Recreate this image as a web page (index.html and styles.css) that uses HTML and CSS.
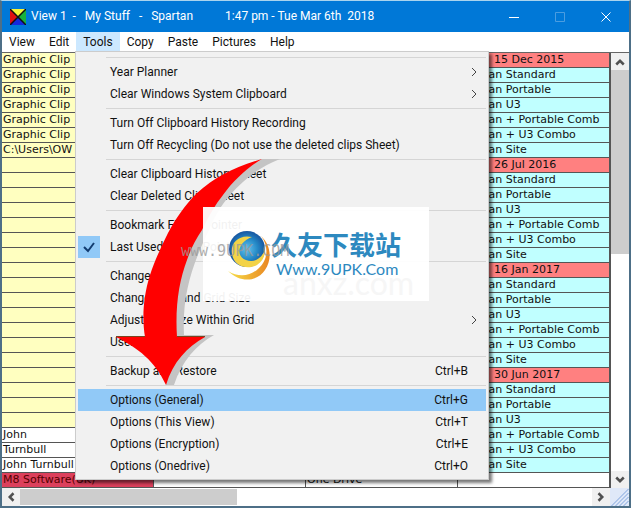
FILE: index.html
```html
<!DOCTYPE html>
<html lang="en">
<head>
<meta charset="utf-8">
<title>View 1 - My Stuff - Spartan</title>
<link rel="stylesheet" href="styles.css">
</head>
<body>
<main class="window">
  <header class="titlebar">
    <svg class="app-icon" viewBox="0 0 16 16" aria-hidden="true">
      <path fill="#f4f43a" d="M0 0h16L8 8z"/><path fill="#19b23c" d="M16 0v16L8 8z"/><path fill="#1428dc" d="M0 16h16L8 8z"/><path fill="#e01010" d="M0 0v16l8-8z"/>
      <path stroke="#111" stroke-width="1.500" d="M0 0l16 16M16 0L0 16"/>
    </svg>
    <h1 class="title"><span>View 1&nbsp; - &nbsp; My Stuff &nbsp; - &nbsp; Spartan</span><span>1:47 pm - Tue Mar 6th&nbsp; 2018</span></h1>
    <div class="controls">
      <button aria-label="Minimize"><svg viewBox="0 0 12 12"><path d="M1 6.500h10"/></svg></button>
      <button class="dim" aria-label="Maximize"><svg viewBox="0 0 12 12"><path d="M1.500 1.500h9v9h-9z"/></svg></button>
      <button aria-label="Close"><svg viewBox="0 0 12 12"><path d="M1.500 1.500l9 9m0-9l-9 9"/></svg></button>
    </div>
  </header>
  <nav class="menubar">
    <button>View</button><button>Edit</button><button class="open">Tools</button><button>Copy</button><button>Paste</button><button>Pictures</button><button>Help</button>
  </nav>
  <section class="workspace">
    <table class="sheet"><tbody id="rows"></tbody></table>
    <div class="vscroll">
      <button aria-label="Scroll up"><svg viewBox="0 0 8 8"><path d="M1 6l3-3 3 3"/></svg></button>
      <div class="track"><div class="thumb"></div></div>
      <button aria-label="Scroll down"><svg viewBox="0 0 8 8"><path d="M1 2l3 3 3-3"/></svg></button>
    </div>
    <div class="popup">
      <hr>
      <button>Year Planner<svg viewBox="0 0 8 8"><path d="M2 0l4 4-4 4"/></svg></button>
      <button>Clear Windows System Clipboard<svg viewBox="0 0 8 8"><path d="M2 0l4 4-4 4"/></svg></button>
      <hr>
      <button>Turn Off Clipboard History Recording</button>
      <button>Turn Off Recycling (Do not use the deleted clips Sheet)</button>
      <hr>
      <button>Clear Clipboard History Sheet</button>
      <button>Clear Deleted Clips Sheet</button>
      <hr>
      <button>Bookmark Finger Pointer</button>
      <button class="checked"><svg class="tick" viewBox="0 0 22 22"><path d="M6 11l4 4 6-8"/></svg>Last Used Finger Pointer</button>
      <hr>
      <button>Change Font</button>
      <button>Change Font and Grid Size</button>
      <button>Adjust Clip Size Within Grid<svg viewBox="0 0 8 8"><path d="M2 0l4 4-4 4"/></svg></button>
      <button>User Sounds</button>
      <hr>
      <button>Backup and Restore<kbd>Ctrl+B</kbd></button>
      <hr>
      <button class="selected">Options (General)<kbd>Ctrl+G</kbd></button>
      <button>Options (This View)<kbd>Ctrl+T</kbd></button>
      <button>Options (Encryption)<kbd>Ctrl+E</kbd></button>
      <button>Options (Onedrive)<kbd>Ctrl+O</kbd></button>
    </div>
  </section>
  <footer class="hscroll">
    <button aria-label="Scroll left"><svg viewBox="0 0 8 8"><path d="M6 1L3 4l3 3"/></svg></button>
    <div class="track"><div class="thumb"></div></div>
    <button aria-label="Scroll right"><svg viewBox="0 0 8 8"><path d="M2 1l3 3-3 3"/></svg></button>
    <svg class="grip" viewBox="0 0 18 18" aria-hidden="true"><path d="M1 18L18 1M5 18L18 5M9 18l9-9M13 18l5-5"/></svg>
  </footer>
  <svg class="arrow" viewBox="0 0 170 232" aria-hidden="true">
    <path fill="#c4c4c4" d="M168 4C148 12 132 24 118 40 108 52 102 62 97 75 80 110 70 140 72 180H102C84 190 70 206 62 230L54 230 60 100 110 30 150 4z"/>
    <path fill="#f00" d="M150 4C122 12 103 22 85 38 73 50 64 63 56 78 49 92 43 105 38 120 31 142 30 164 33 182H4C26 193 43 206 54 230 61 207 75 192 93 182H65C63 152 67 126 75 105 79 93 84 84 90 75 96 62 103 50 111 40 122 25 135 13 150 4z"/>
    <path stroke="#79451f" d="M4 181.500h29M65 181.500h28"/>
  </svg>
  <aside class="brand">
    <svg viewBox="0 0 44 50" aria-hidden="true">
      <defs><radialGradient id="globe"><stop offset="0" stop-color="#62c4ee"/><stop offset=".6" stop-color="#2387c5"/><stop offset="1" stop-color="#1856a0"/></radialGradient><linearGradient id="gold"><stop offset="0" stop-color="#f7df48"/><stop offset="1" stop-color="#e98622"/></linearGradient></defs>
      <circle cx="21" cy="19" r="18" fill="url(#globe)"/>
      <path fill="#f3d347" d="M26 7C13 4 4 13 6 24c2 13 16 16 25 11 6-4 8-9 8-15-4 9-11 13-19 10C9 26 12 12 26 7z"/>
      <path fill="url(#gold)" d="M35 6c8 10 7 24-2 32-8 8-20 10-31 3 13 13 30 10 37-1C47 28 44 14 35 6z"/>
    </svg>
    <div class="brand-text"><strong>久友下载站</strong><span>Www.9UPK.Com</span></div>
    <span class="ghost">anxz.com</span>
  </aside>
  <span class="watermark">www.9UPK.COM</span>
</main>
<script src="rows.js"></script>
</body>
</html>
```
FILE: styles.css
```css
* { box-sizing: border-box; }
body { margin: 0; font: 12px/15px Roboto, "Open Sans", sans-serif; color: #111; background: #fff; }
button { border: 0; padding: 0; margin: 0; background: none; font: inherit; color: inherit; }
svg { fill: none; stroke: none; flex: none; }
.window { position: relative; margin-right: 2px; border: 2px solid #4d6f87; border-top: 1px solid #a9d4ee; background: #fff; overflow: hidden; }
.titlebar { height: 31px; display: flex; align-items: center; padding-left: 8px; gap: 5px; background: #0078d7; color: #fff; }
.app-icon { width: 16px; height: 16px; }
.title { flex: 1; display: flex; gap: 32px; margin: 0; font-size: 12px; font-weight: 400; white-space: nowrap; }
.controls { display: flex; }
.controls button { width: 46px; height: 31px; display: grid; place-items: center; }
.controls svg { width: 12px; height: 12px; stroke: #fff; }
.controls .dim svg { stroke: #4b9de0; }
.menubar { height: 20px; display: flex; }
.menubar button { padding: 0 7px; }
.menubar .open { background: #cce8ff; }
.workspace { position: relative; display: flex; border-top: 1px solid #666; }
.sheet { flex: 1; width: 100%; min-width: 0; table-layout: fixed; border-collapse: separate; border-spacing: 0; font: 11px/14px "DejaVu Sans", sans-serif; }
.sheet td { height: 15px; padding: 0 0 0 1px; border: solid #555; border-width: 0 1px 1px 0; overflow: hidden; white-space: nowrap; }
.yellow { background: #ffffc0; }
.cyan { background: #c0ffff; }
.red { background: #ff8080; }
.crimson { background: #dc405c; color: #500; }
.sheet td.date { padding-left: 36px; }
.vscroll { flex: none; width: 19px; display: flex; flex-direction: column; border-left: 1px solid #555; }
.vscroll button { height: 17px; }
.vscroll .track, .hscroll .track { flex: 1; background: #fff; }
.vscroll .thumb { height: 46%; background: #cdcdcd; }
.vscroll button, .hscroll button { background: #f0f0f0; display: grid; place-items: center; }
.vscroll svg, .hscroll button svg { width: 10px; height: 10px; stroke: #505050; stroke-width: 2; }
.hscroll { height: 18px; display: flex; }
.hscroll button { width: 18px; }
.hscroll .track { padding: 1px 0; }
.hscroll .thumb { width: 38%; height: 16px; background: #cdcdcd; }
.grip { width: 19px; height: 18px; background: #dfe8f8; stroke: #7fa3dc; }
.popup { position: absolute; left: 73px; top: -2px; width: 414px; padding: 2px; border: 1px solid #ccc; background: #f1f1f1; box-shadow: 3px 3px 3px #0008; }
.popup hr { height: 1px; margin: 3px 0 3px 28px; border: 0; background: #d5d5d5; }
.popup button { position: relative; width: 100%; height: 22px; display: flex; align-items: center; justify-content: space-between; padding: 0 18px 0 32px; white-space: nowrap; }
.popup svg { width: 8px; height: 8px; margin-right: -10px; stroke: #444; }
.popup kbd { font: inherit; }
.popup .selected { background: #91c9f7; }
.popup .tick { position: absolute; left: 0; top: 0; width: 22px; height: 22px; margin: 0; background: #91c9f7; stroke: #123c70; stroke-width: 2; }
.arrow { position: absolute; left: 110px; top: 154px; width: 170px; height: 232px; }
.brand { position: absolute; z-index: 1; left: 201px; top: 206px; width: 226px; height: 94px; display: flex; gap: 1px; padding: 23px 0 0 23px; background: #fffffff0; }
.brand svg { width: 44px; height: 50px; }
.brand-text { display: flex; flex-direction: column; color: #2d89bf; }
.brand-text strong { font: 700 26px/28px "Noto Sans CJK SC", sans-serif; }
.brand-text span { font: 16px/22px Lato, sans-serif; padding-left: 5px; }
.ghost { position: absolute; left: 80px; bottom: 2px; font: 32px/32px Lato, sans-serif; color: #f6f6f6; z-index: -1; }
.watermark { position: absolute; z-index: 2; left: 179px; top: 242px; font: 15px/17px "DejaVu Sans Mono", monospace; color: #999999cc; }
```
FILE: rows.js
```js
const products = ["Standard", "Portable", "U3", "+ Portable Comb", "+ U3 Combo", "Site"];
const dates = ["15 Dec 2015", "26 Jul 2016", "16 Jan 2017", "30 Jun 2017"];
const contacts = ["John", "Turnbull", "John Turnbull"];
const body = document.getElementById("rows");

function cell(row, text, kind) {
  const td = row.insertCell();
  td.textContent = text;
  td.className = kind;
}

for (let i = 0; i < 29; i++) {
  const row = body.insertRow();
  if (i < 25) cell(row, i < 6 ? "Graphic Clip" : i === 6 ? "C:\\Users\\OW" : "", "yellow");
  else if (i < 28) cell(row, contacts[i - 25], "");
  else cell(row, "M8 Software(UK)", "crimson");
  cell(row, "", "");
  cell(row, i === 28 ? "One Drive" : "", "");
  if (i === 28) cell(row, "", "");
  else if (i % 7 === 0) cell(row, dates[i / 7], "red date");
  else cell(row, "Spartan " + products[i % 7 - 1], "cyan");
}
```
